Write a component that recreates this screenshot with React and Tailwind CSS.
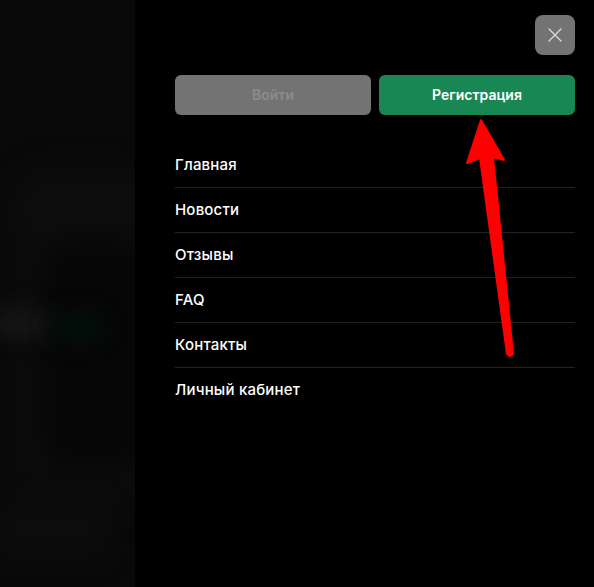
import { X } from "lucide-react";

const links = ["Главная", "Новости", "Отзывы", "FAQ", "Контакты", "Личный кабинет"];

export default function App() {
  return (
    <div className="relative flex h-[587px] w-[594px] overflow-hidden bg-black font-['Inter',sans-serif]">
      {/* dimmed page behind the drawer */}
      <div className="relative w-[135px] shrink-0 overflow-hidden bg-[#090909]">
        <div className="absolute left-[10px] top-[170px] h-[340px] w-[150px] rounded-[40px] bg-[#0d0d0d] blur-[14px]" />
        <div className="absolute left-[40px] top-[240px] h-[230px] w-[110px] rounded-[30px] bg-[#060606] blur-[16px]" />
        <div className="absolute -left-[10px] top-[308px] h-[30px] w-[60px] rounded-full bg-[#151515] blur-[10px]" />
        <div className="absolute left-[50px] top-[312px] h-[30px] w-[55px] rounded-full bg-[#04100a] blur-[10px]" />
        <div className="absolute -left-[10px] top-[500px] h-[60px] w-[120px] rounded-[20px] bg-[#0c0c0c] blur-[12px]" />
      </div>

      {/* drawer */}
      <div className="flex flex-1 flex-col pl-10 pr-[19px] pt-[15px]">
        <div className="flex justify-end">
          <button className="flex h-10 w-10 items-center justify-center rounded-lg bg-[#737373] text-[#dcdcdc]">
            <X size={24} strokeWidth={1.3} />
          </button>
        </div>

        <div className="mt-5 flex gap-2">
          <button className="h-10 flex-1 rounded-md bg-[#737373] text-sm font-semibold text-[#8c8c8c]">
            Войти
          </button>
          <button className="h-10 flex-1 rounded-md bg-[#198754] text-sm font-semibold text-white">
            Регистрация
          </button>
        </div>

        <nav className="mt-7 flex flex-col">
          {links.map((l, i) => (
            <a
              key={l}
              className={`flex h-[45px] items-center text-[15px] font-medium tracking-[0.2px] text-white ${
                i < links.length - 1 ? "border-b border-[#222]" : ""
              }`}
            >
              {l}
            </a>
          ))}
        </nav>
      </div>

      {/* red annotation arrow */}
      <svg className="pointer-events-none absolute left-0 top-0" width="594" height="587">
        <path d="M481 120 L467 163 L480 158 L507 354 Q510 358 513 354 L493 157 L504 160 Z" fill="#ff0000" stroke="#ff0000" strokeWidth="2" strokeLinejoin="round" />
      </svg>
    </div>
  );
}
